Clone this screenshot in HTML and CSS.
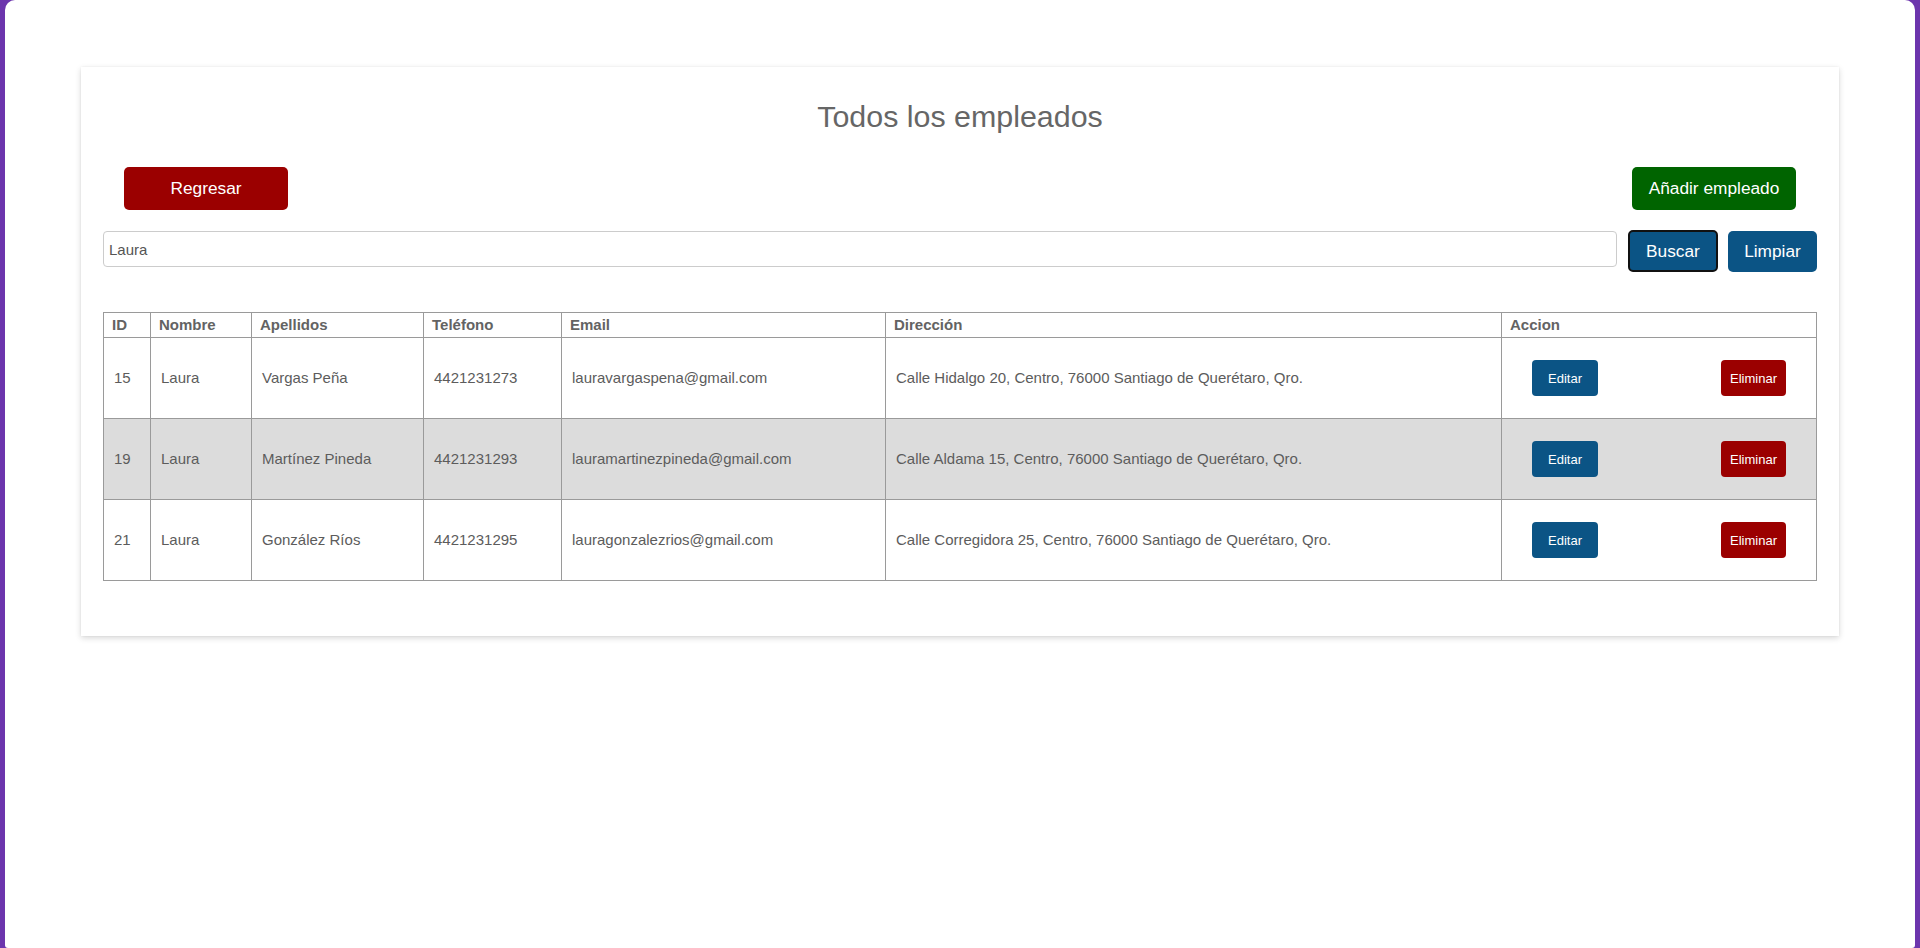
FILE: index.html
```html
<!DOCTYPE html>
<html lang="es">
<head>
<meta charset="utf-8">
<title>Todos los empleados</title>
<link rel="stylesheet" href="styles.css">
</head>
<body>
<div class="frame">
  <div class="card">
    <h1 class="title">Todos los empleados</h1>
    <div class="top-actions">
      <button class="btn btn-back">Regresar</button>
      <button class="btn btn-add">Añadir empleado</button>
    </div>
    <div class="search-row">
      <input class="search-input" type="text" value="Laura">
      <button class="btn btn-blue btn-search">Buscar</button>
      <button class="btn btn-blue btn-clear">Limpiar</button>
    </div>
    <table class="emp-table">
      <colgroup>
        <col class="c-id"><col class="c-nombre"><col class="c-apellidos"><col class="c-tel"><col class="c-email"><col class="c-dir"><col class="c-accion">
      </colgroup>
      <thead>
        <tr><th>ID</th><th>Nombre</th><th>Apellidos</th><th>Teléfono</th><th>Email</th><th>Dirección</th><th>Accion</th></tr>
      </thead>
      <tbody>
        <tr>
          <td>15</td><td>Laura</td><td>Vargas Peña</td><td>4421231273</td><td>lauravargaspena@gmail.com</td><td>Calle Hidalgo 20, Centro, 76000 Santiago de Querétaro, Qro.</td>
          <td class="actions"><div class="action-box"><button class="sm-btn sm-edit">Editar</button><button class="sm-btn sm-del">Eliminar</button></div></td>
        </tr>
        <tr>
          <td>19</td><td>Laura</td><td>Martínez Pineda</td><td>4421231293</td><td>lauramartinezpineda@gmail.com</td><td>Calle Aldama 15, Centro, 76000 Santiago de Querétaro, Qro.</td>
          <td class="actions"><div class="action-box"><button class="sm-btn sm-edit">Editar</button><button class="sm-btn sm-del">Eliminar</button></div></td>
        </tr>
        <tr>
          <td>21</td><td>Laura</td><td>González Ríos</td><td>4421231295</td><td>lauragonzalezrios@gmail.com</td><td>Calle Corregidora 25, Centro, 76000 Santiago de Querétaro, Qro.</td>
          <td class="actions"><div class="action-box"><button class="sm-btn sm-edit">Editar</button><button class="sm-btn sm-del">Eliminar</button></div></td>
        </tr>
      </tbody>
    </table>
  </div>
</div>
</body>
</html>
```

FILE: styles.css
```css
* { box-sizing: border-box; }
html, body { margin: 0; padding: 0; height: 100%; }
body {
  background: #6c35ad;
  font-family: "Liberation Sans", Arial, sans-serif;
  overflow: hidden;
}
.frame {
  margin: 0 5px;
  height: 948px;
  background: #ffffff;
  border-radius: 10px 10px 3px 3px;
  padding-top: 67px;
}
.card {
  width: 1758px;
  margin: 0 auto;
  background: #ffffff;
  box-shadow: 0 2px 6px rgba(0, 0, 0, 0.16), 0 0 2px rgba(0, 0, 0, 0.05);
  padding: 32px 22px 55px;
}
.title {
  margin: 0;
  text-align: center;
  font-size: 30.4px;
  line-height: 34px;
  font-weight: normal;
  color: #666666;
}
.top-actions {
  display: flex;
  justify-content: space-between;
  padding: 0 21px;
  margin-top: 34px;
}
.btn {
  font-family: "Liberation Sans", Arial, sans-serif;
  font-size: 17.3px;
  color: #ffffff;
  border: none;
  border-radius: 5px;
  cursor: pointer;
  padding: 0;
}
.btn-back { background: #9b0000; width: 164px; height: 43px; }
.btn-add { background: #006400; width: 164px; height: 43px; }
.search-row {
  display: flex;
  align-items: flex-start;
  margin-top: 20px;
}
.search-input {
  flex: 1;
  height: 36px;
  margin-top: 1px;
  border: 1px solid #cccccc;
  border-radius: 4px;
  padding: 0 5px;
  font-family: "Liberation Sans", Arial, sans-serif;
  font-size: 15px;
  color: #555555;
}
.btn-blue { background: #0b5485; }
.btn-search {
  margin-left: 11px;
  width: 90px;
  height: 42px;
  border: 2px solid #111111;
}
.btn-clear {
  margin-left: 10px;
  margin-top: 1px;
  width: 89px;
  height: 41px;
}
.emp-table {
  width: 1713px;
  margin-top: 40px;
  border-collapse: collapse;
  table-layout: fixed;
  color: #5c5c5c;
  font-size: 15px;
}
.c-id { width: 47px; }
.c-nombre { width: 101px; }
.c-apellidos { width: 172px; }
.c-tel { width: 138px; }
.c-email { width: 324px; }
.c-dir { width: 616px; }
.c-accion { width: 315px; }
.emp-table th, .emp-table td {
  border: 1px solid #9a9a9a;
  text-align: left;
  white-space: nowrap;
}
.emp-table th {
  font-weight: bold;
  line-height: 18px;
  padding: 3px 8px;
  color: #636363;
}
.emp-table td {
  padding: 22px 10px;
  line-height: 18px;
  vertical-align: middle;
}
.emp-table tbody tr:nth-child(even) { background: #dcdcdc; }
.emp-table td.actions { padding: 22px 30px 22px 30px; }
.action-box {
  display: flex;
  justify-content: space-between;
}
.sm-btn {
  height: 36px;
  border: none;
  border-radius: 4px;
  color: #ffffff;
  font-family: "Liberation Sans", Arial, sans-serif;
  font-size: 13px;
  padding: 0;
  cursor: pointer;
}
.sm-edit { background: #0b5485; width: 66px; }
.sm-del { background: #9b0000; width: 65px; }
```
